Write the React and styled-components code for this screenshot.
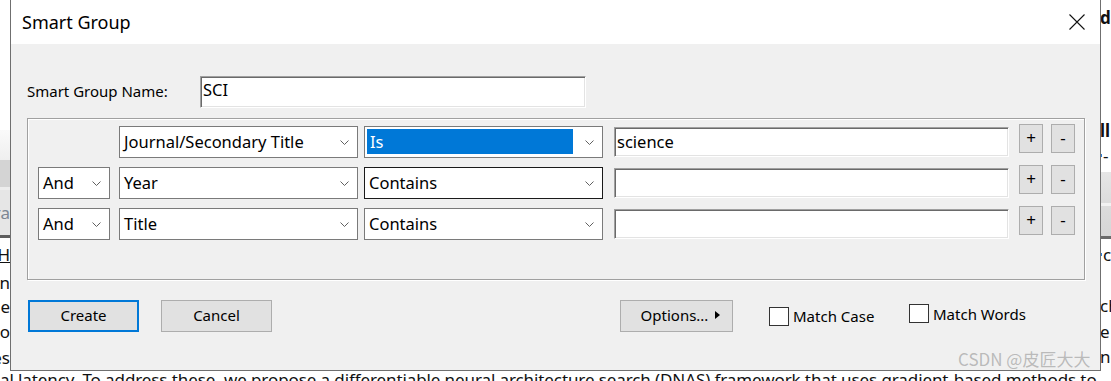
import React from 'react'
import styled, { createGlobalStyle } from 'styled-components'

const GlobalStyle = createGlobalStyle`
   html, body {
      margin: 0;
      padding: 0;
      background: #fff;
   }
`

const uiFont = `"Noto Sans", "Noto Sans CJK SC", sans-serif`

const rightPeek = [
   { h: 6 },
   { h: 22, text: 'd', bold: true },
   { h: 92 },
   { h: 20, text: 'll', bold: true },
   { h: 30, text: '-', mark: '#2f7fd6' },
   { h: 2 },
   { h: 31, bg: 'linear-gradient(#e6e6e6, #dcdcdc)' },
   { h: 3, bg: '#f2f2f2' },
   { h: 30, bg: 'linear-gradient(#dcdcdc, #d6d6d6)' },
   { h: 3, bg: '#6a6a6a' },
   { h: 30, text: 'c', mark: '#2f7fd6' },
   { h: 24.25 },
   { h: 25.25, text: 'ch' },
   { h: 25.25, text: 'e' },
   { h: 25.25, text: 'no' }
]

const leftPeek = [
   { h: 130 },
   { h: 30, bg: 'linear-gradient(#fafafa, #efefef)' },
   { h: 27, bg: '#d4d4d4' },
   { h: 3, bg: '#ededed' },
   { h: 45, bg: '#e6e6e6', text: 'ra', color: '#7d8794' },
   { h: 3, bg: '#5e5e5e' },
   { h: 32, text: 'H', underline: true, mark: '#e8872a' },
   { h: 24, text: 'rn' },
   { h: 25, text: 'e' },
   { h: 25.5, text: 'no' },
   { h: 25.5, text: 'es' }
]

const rows = [
   { join: null, field: 'Journal/Secondary Title', op: 'Is', selected: true, value: 'science' },
   { join: 'And', field: 'Year', op: 'Contains', focused: true, value: '' },
   { join: 'And', field: 'Title', op: 'Contains', value: '' }
]

const Chevron = () => (
   <svg width="9" height="5" viewBox="0 0 9 5">
      <polyline points="0.5,0.5 4.5,4.5 8.5,0.5" fill="none" stroke="#606060" strokeWidth="1" />
   </svg>
)

const CloseIcon = () => (
   <svg width="16" height="16" viewBox="0 0 16 16">
      <path d="M0.5 0.5 L15.5 15.5 M15.5 0.5 L0.5 15.5" stroke="#111" strokeWidth="1.1" fill="none" />
   </svg>
)

const Caret = () => (
   <svg width="5" height="8" viewBox="0 0 5 8">
      <path d="M0 0 L5 4 L0 8 Z" fill="#000" />
   </svg>
)

const Peek = ({ items, align }) => (
   <PeekColumn $align={align}>
      {items.map((item, i) => (
         <PeekBlock key={i} $h={item.h} $bg={item.bg} $align={align}>
            {item.mark && <PeekMark $color={item.mark} />}
            {item.text && (
               <PeekText $bold={item.bold} $color={item.color} $underline={item.underline}>
                  {item.text}
               </PeekText>
            )}
         </PeekBlock>
      ))}
   </PeekColumn>
)

const Select = ({ width, gap = 0, children, focused, selected }) => (
   <SelectBox $width={width} $gap={gap} $focused={focused}>
      {selected ? <Highlight>{children}</Highlight> : <SelectValue>{children}</SelectValue>}
      <Chevron />
   </SelectBox>
)

const App = () => (
   <>
      <GlobalStyle />
      <Page>
         <Backdrop>
            <Panes>
               <Peek items={leftPeek} align="end" />
               <Peek items={rightPeek} align="start" />
            </Panes>
            <LatencyLine>
               al latency. To address these, we propose a differentiable neural architecture search (DNAS) framework that uses gradient-based methods to
            </LatencyLine>
         </Backdrop>

         <Dialog>
            <TitleBar>
               <Title>Smart Group</Title>
               <CloseIcon />
            </TitleBar>
            <Body>
               <NameRow>
                  <Label>Smart Group Name:</Label>
                  <NameInput>SCI</NameInput>
               </NameRow>

               <GroupBox>
                  {rows.map((row, i) => (
                     <Row key={i}>
                        {row.join ? <Select width={72}>{row.join}</Select> : <JoinSpacer />}
                        <Select width={239} gap={9}>
                           {row.field}
                        </Select>
                        <Select width={239} gap={6} focused={row.focused} selected={row.selected}>
                           {row.op}
                        </Select>
                        <ValueInput>{row.value}</ValueInput>
                        <SmallButton $gap={10}>+</SmallButton>
                        <SmallButton $gap={8}>-</SmallButton>
                     </Row>
                  ))}
               </GroupBox>

               <Footer>
                  <Button $primary>Create</Button>
                  <Button $gap={22}>Cancel</Button>
                  <OptionsButton $gap={348}>
                     Options...
                     <Caret />
                  </OptionsButton>
                  <CheckItem $width={140} $gap={36}>
                     <CheckBox />
                     Match Case
                  </CheckItem>
                  <CheckItem $lift>
                     <CheckBox />
                     Match Words
                  </CheckItem>
               </Footer>
            </Body>
         </Dialog>

         <Watermark>CSDN @皮匠大大</Watermark>
      </Page>
   </>
)

export default App

const Page = styled.div`
   position: relative;
   width: 1111px;
   height: 381px;
   overflow: hidden;
   background: #fff;
`

const Backdrop = styled.div`
   display: flex;
   flex-direction: column;
   font-family: ${uiFont};
   font-size: 17px;
   color: #111;
`

const Panes = styled.div`
   display: flex;
   justify-content: space-between;
   height: 367px;
`

const PeekColumn = styled.div`
   display: flex;
   flex-direction: column;
   width: ${p => (p.$align === 'end' ? '10px' : '11px')};
   overflow: hidden;
`

const PeekBlock = styled.div`
   flex: 0 0 ${p => p.$h}px;
   display: flex;
   align-items: center;
   justify-content: ${p => (p.$align === 'end' ? 'flex-end' : 'flex-start')};
   gap: 1px;
   background: ${p => p.$bg || 'transparent'};
   white-space: nowrap;
`

const PeekText = styled.span`
   font-weight: ${p => (p.$bold ? 700 : 400)};
   color: ${p => p.$color || '#111'};
   text-decoration: ${p => (p.$underline ? 'underline' : 'none')};
   line-height: 1;
`

const PeekMark = styled.span`
   flex: 0 0 2px;
   height: 3px;
   background: ${p => p.$color};
`

const LatencyLine = styled.div`
   height: 25px;
   line-height: 25px;
   white-space: nowrap;
   letter-spacing: -0.1px;
`

const Dialog = styled.section`
   position: absolute;
   left: 10px;
   top: -1px;
   width: 1091px;
   height: 372px;
   box-sizing: border-box;
   border: 1px solid #6f6f6f;
   background: #f0f0f0;
   display: flex;
   flex-direction: column;
   font-family: ${uiFont};
   font-size: 15px;
   color: #000;
`

const TitleBar = styled.header`
   height: 44px;
   flex-shrink: 0;
   background: #fff;
   display: flex;
   align-items: center;
   justify-content: space-between;
   padding: 0 15px 0 11px;
`

const Title = styled.h1`
   margin: 0;
   font-size: 18px;
   font-weight: 400;
`

const Body = styled.div`
   display: flex;
   flex-direction: column;
   padding: 32px 15px 0 16px;
`

const NameRow = styled.div`
   display: flex;
   align-items: center;
   height: 32px;
`

const Label = styled.span`
   width: 173px;
   padding-bottom: 2px;
`

const sunken = `
   box-sizing: border-box;
   background: #fff;
   border: 1px solid;
   border-color: #a0a0a0 #fff #fff #a0a0a0;
   box-shadow: inset 1px 1px 0 #6a6a6a, inset -1px -1px 0 #e3e3e3;
   display: flex;
   align-items: center;
   font-size: 16.5px;
   white-space: nowrap;
`

const NameInput = styled.div`
   ${sunken}
   width: 386px;
   height: 32px;
   padding: 0 3px 5px 2px;
`

const GroupBox = styled.div`
   margin-top: 10px;
   height: 162px;
   box-sizing: border-box;
   border: 1px solid #a0a0a0;
   box-shadow: inset 1px 1px 0 #fff, 1px 1px 0 #fff;
   padding: 7px 0 0 10px;
   display: flex;
   flex-direction: column;
   gap: 9px;
`

const Row = styled.div`
   display: flex;
   align-items: center;
   height: 32px;
`

const JoinSpacer = styled.div`
   width: 72px;
   flex-shrink: 0;
`

const SelectBox = styled.div`
   box-sizing: border-box;
   width: ${p => p.$width}px;
   height: 32px;
   flex-shrink: 0;
   margin-left: ${p => p.$gap}px;
   border: 1px solid ${p => (p.$focused ? '#1a1a1a' : '#7a7a7a')};
   background: #fff;
   display: flex;
   align-items: center;
   padding-right: 8px;
   font-size: 16.5px;
`

const SelectValue = styled.span`
   flex: 1;
   padding: 0 0 1px 4px;
   white-space: nowrap;
`

const Highlight = styled.span`
   flex: 1;
   align-self: stretch;
   margin: 2px 12px 3px 2px;
   padding-left: 3px;
   background: #0078d7;
   color: #fff;
   display: flex;
   align-items: center;
`

const ValueInput = styled.div`
   ${sunken}
   width: 395px;
   height: 30px;
   margin-left: 11px;
   flex-shrink: 0;
   padding: 0 3px 2px 2px;
`

const SmallButton = styled.button`
   box-sizing: border-box;
   width: 24px;
   height: 29px;
   align-self: flex-start;
   margin: -2px 0 0 ${p => p.$gap}px;
   padding: 0 0 2px;
   border: 1px solid #adadad;
   background: #e1e1e1;
   font-family: ${uiFont};
   font-size: 17px;
   color: #000;
`

const Footer = styled.div`
   display: flex;
   align-items: center;
   margin-top: 20px;
   padding-left: 1px;
`

const Button = styled.button`
   box-sizing: border-box;
   width: 111px;
   height: 32px;
   margin-left: ${p => p.$gap || 0}px;
   padding: 0 0 2px;
   border: ${p => (p.$primary ? '2px solid #0078d7' : '1px solid #adadad')};
   background: #e1e1e1;
   font-family: ${uiFont};
   font-size: 15px;
   color: #000;
`

const OptionsButton = styled(Button)`
   width: 113px;
   display: flex;
   align-items: center;
   justify-content: center;
   gap: 7px;
   padding-left: 8px;
`

const CheckItem = styled.label`
   display: flex;
   align-items: center;
   gap: 4px;
   width: ${p => (p.$width ? `${p.$width}px` : 'auto')};
   margin-left: ${p => p.$gap || 0}px;
   margin-bottom: ${p => (p.$lift ? 5 : 0)}px;
`

const CheckBox = styled.span`
   box-sizing: border-box;
   width: 20px;
   height: 19px;
   border: 1px solid #333;
   background: #fff;
`

const Watermark = styled.div`
   position: absolute;
   left: 958px;
   top: 346px;
   font-family: "Noto Sans CJK SC", sans-serif;
   font-size: 17px;
   color: rgba(140, 140, 140, 0.55);
   white-space: nowrap;
`
